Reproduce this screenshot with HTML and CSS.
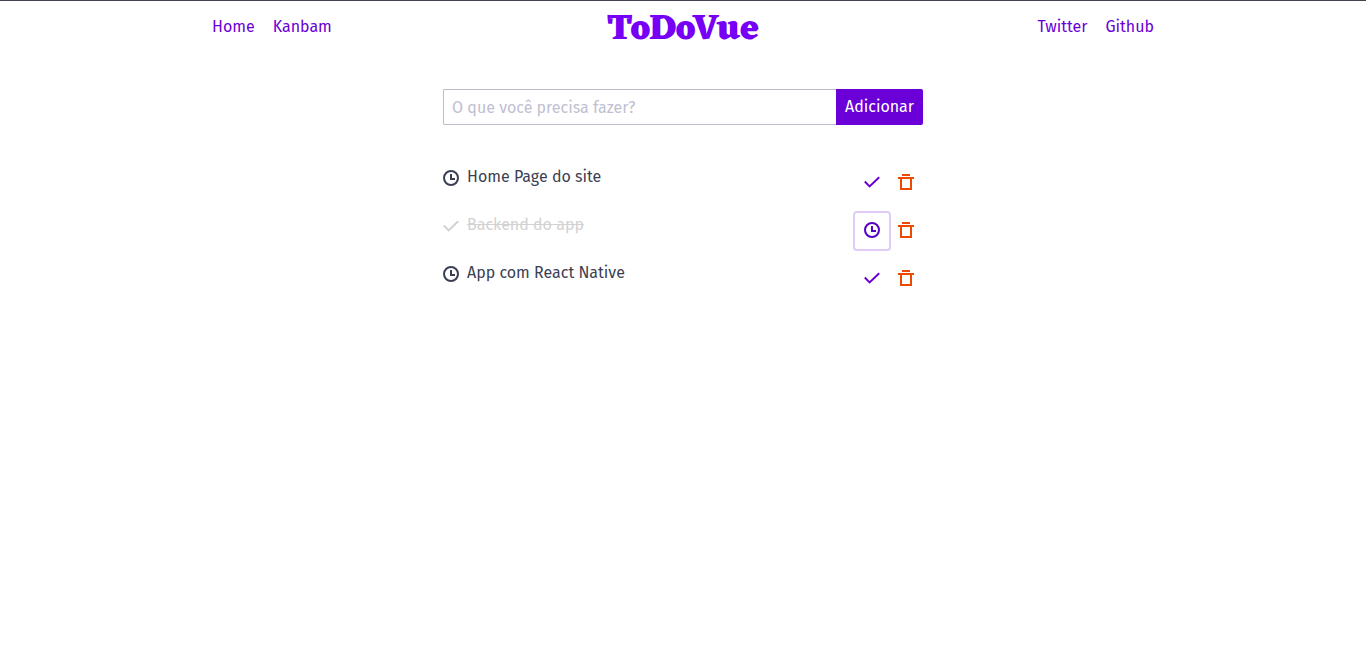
FILE: index.html
```html
<!DOCTYPE html>
<html lang="pt-BR">
<head>
<meta charset="utf-8">
<meta name="viewport" content="width=device-width, initial-scale=1">
<title>ToDoVue</title>
<link rel="stylesheet" href="styles.css">
</head>
<body>
<svg class="sprite" aria-hidden="true">
  <symbol id="clock" viewBox="0 0 16 16"><circle cx="8" cy="8" r="7"/><path d="M8 4v5h4"/></symbol>
  <symbol id="check" viewBox="0 0 16 16"><path d="M.8 7.5l4.8 4.9 9.6-9.2"/></symbol>
  <symbol id="trash" viewBox="0 0 16 16"><path d="M4 1h8M0 4h16M3 4v11h10V4"/></symbol>
</svg>
<header class="navbar">
  <nav class="nav-group">
    <a class="nav-link" href="#">Home</a>
    <a class="nav-link" href="#">Kanbam</a>
  </nav>
  <a class="brand" href="#">ToDoVue</a>
  <nav class="nav-group nav-group-end">
    <a class="nav-link" href="#">Twitter</a>
    <a class="nav-link" href="#">Github</a>
  </nav>
</header>
<main class="content">
  <form class="task-form">
    <input class="task-input" type="text" aria-label="Nova tarefa" placeholder="O que você precisa fazer?">
    <button class="add-button" type="button">Adicionar</button>
  </form>
  <ul class="task-list">
    <li class="task">
      <svg class="icon status"><use href="#clock"/></svg>
      <span class="task-name">Home Page do site</span>
      <button class="action" type="button" aria-label="Concluir"><svg class="icon"><use href="#check"/></svg></button>
      <button class="action remove" type="button" aria-label="Excluir"><svg class="icon"><use href="#trash"/></svg></button>
    </li>
    <li class="task done">
      <svg class="icon status"><use href="#check"/></svg>
      <span class="task-name">Backend do app</span>
      <button class="action focused" type="button" aria-label="Reabrir"><svg class="icon"><use href="#clock"/></svg></button>
      <button class="action remove" type="button" aria-label="Excluir"><svg class="icon"><use href="#trash"/></svg></button>
    </li>
    <li class="task">
      <svg class="icon status"><use href="#clock"/></svg>
      <span class="task-name">App com React Native</span>
      <button class="action" type="button" aria-label="Concluir"><svg class="icon"><use href="#check"/></svg></button>
      <button class="action remove" type="button" aria-label="Excluir"><svg class="icon"><use href="#trash"/></svg></button>
    </li>
  </ul>
</main>
</body>
</html>
```
FILE: styles.css
```css
* { box-sizing: border-box; }
body {
  margin: 0;
  border-top: 1px solid #454050;
  background: #fff;
  color: #3b3f54;
  font: 16px/24px "Fira Sans", "Noto Sans", sans-serif;
}
.sprite { position: absolute; width: 0; height: 0; }
.navbar {
  display: grid;
  grid-template-columns: 1fr auto 1fr;
  align-items: center;
  max-width: 960px;
  height: 52px;
  margin: 0 auto;
}
.nav-group { display: flex; }
.nav-group-end { justify-content: flex-end; }
.nav-link { padding: 6px 9px; color: #6a00d7; text-decoration: none; }
.brand {
  padding-top: 6px;
  color: #7600f5;
  font: 800 36px/44px Eczar, "DejaVu Serif", serif;
  text-decoration: none;
}
.content { max-width: 480px; margin: 36px auto 0; }
.task-form { display: flex; }
.task-input {
  flex: 1;
  min-width: 0;
  height: 36px;
  padding: 4px 8px;
  border: 1px solid #bcbccf;
  border-right: 0;
  border-radius: 2px 0 0 2px;
  background: #fff;
  color: inherit;
  font: inherit;
}
.task-input::placeholder { color: #bfc0d1; opacity: 1; }
.add-button {
  height: 36px;
  padding: 0 9px;
  border: 0;
  border-radius: 0 2px 2px 0;
  background: #6a00d7;
  color: #fff;
  font: inherit;
}
.task-list { margin: 40px 0 0; padding: 0; list-style: none; }
.task { display: flex; align-items: flex-start; margin-bottom: 12px; }
.icon {
  display: block;
  width: 16px;
  height: 16px;
  fill: none;
  stroke: currentColor;
  stroke-width: 2;
}
.status { margin: 5px 8px 0 0; }
.task-name { flex: 1; }
.done .status, .done .task-name { color: #d2d2d2; }
.done .task-name { text-decoration: line-through; }
.action {
  height: 36px;
  padding: 0 9px 2px;
  border: 0;
  border-radius: 2px;
  background: transparent;
  color: #6a00d7;
}
.focused { box-shadow: 0 0 0 2px #e0ccf7; color: #5300c7; }
.remove { color: #eb4a00; }
```
